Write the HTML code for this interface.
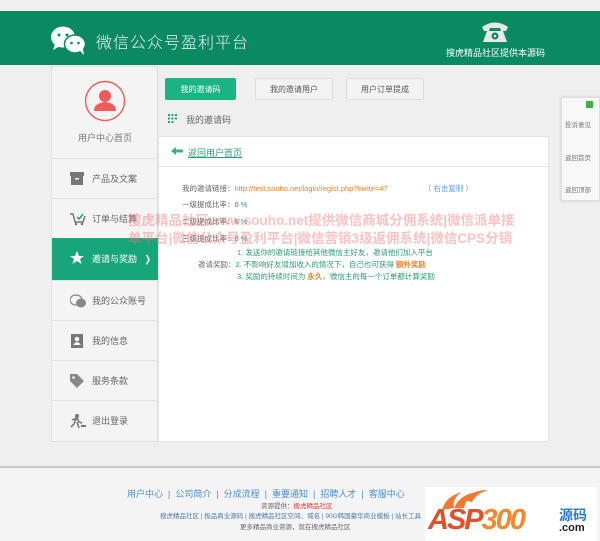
<!DOCTYPE html>
<html><head><meta charset="utf-8"><style>
*{margin:0;padding:0;box-sizing:border-box}
body{width:600px;height:541px;overflow:hidden;background:#efefef;font-family:"Liberation Sans","Noto Sans CJK SC",sans-serif;position:relative;font-size:9px;color:#555}
.abs{position:absolute}
#hdr{left:0;top:11px;width:600px;height:54px;background:#0b8a62}
#side{left:51px;top:66px;width:107px;height:376px;background:#f4f4f4;border:1px solid #e0e0e0}
.it{position:absolute;left:0;width:106px;height:40px;border-top:1px solid #e2e2e2;font-size:9px;color:#666;line-height:40px;padding-left:40px}
.it svg{position:absolute;left:18px;top:13px}
.act{background:#17a67b;color:#fff}
.tab{position:absolute;top:78px;height:22px;line-height:22px;text-align:center;font-size:8px;border:1px solid #ddd;background:#f3f3f3;color:#555;border-radius:2px}
#main{left:158px;top:136px;width:391px;height:306px;background:#fff;border:1px solid #e3e3e3}
.row{position:absolute;font-size:7.5px;color:#666;white-space:nowrap}
.wm{position:absolute;color:rgba(240,120,120,.45);font-size:13.5px;font-weight:bold;white-space:nowrap}
.fl{position:absolute;font-size:9px;color:#4a8ed0;white-space:nowrap}
</style></head><body>
<div class="abs" id="hdr"></div>
<svg class="abs" style="left:50px;top:24px" width="38" height="32" viewBox="0 0 38 32"><ellipse cx="13" cy="13" rx="12" ry="10.5" fill="#fff"/><path d="M5 20l-2 6 7-4z" fill="#fff"/><circle cx="9" cy="11" r="1.5" fill="#0b8a62"/><circle cx="17" cy="11" r="1.5" fill="#0b8a62"/><ellipse cx="25" cy="20" rx="10.5" ry="9" stroke="#0b8a62" stroke-width="1.5" fill="#fff"/><path d="M30 27l4 4-1-6z" fill="#fff"/><circle cx="21.5" cy="19" r="1.3" fill="#0b8a62"/><circle cx="28.5" cy="19" r="1.3" fill="#0b8a62"/></svg>
<div class="abs" style="left:96px;top:29px;font-size:16px;color:#eef;letter-spacing:1px;font-weight:300">微信公众号盈利平台</div>
<svg class="abs" style="left:480px;top:19px" width="30" height="24" viewBox="0 0 30 24"><path d="M2 8q13-9 26 0l-2 4h-5l-1-3h-10l-1 3h-5z" fill="#e8e8e8"/><path d="M7 12h16l4 11H3z" fill="#e8e8e8"/><circle cx="15" cy="17" r="3.5" fill="#0b8a62"/><circle cx="15" cy="17" r="1.3" fill="#e8e8e8"/></svg>
<div class="abs" style="left:446px;top:46px;font-size:9px;color:#fff">搜虎精品社区提供本源码</div>

<div class="abs" id="side">
<svg class="abs" style="left:32px;top:13px" width="42" height="42" viewBox="0 0 42 42"><circle cx="21" cy="21" r="19.5" fill="none" stroke="#ef5a5a" stroke-width="1.4"/><circle cx="21" cy="16" r="6" fill="#ef5a5a"/><path d="M10 31q0-8 11-9q11 1 11 9z" fill="#ef5a5a"/></svg>
<div class="abs" style="left:26px;top:64px;font-size:9px;color:#777">用户中心首页</div>
<div class="it" style="top:91px"><svg width="14" height="13"><rect x="0" y="0" width="14" height="4" fill="#777"/><rect x="1" y="4" width="12" height="9" fill="#777"/><rect x="5" y="6" width="4" height="1.5" fill="#f4f4f4"/></svg>产品及文案</div>
<div class="it" style="top:131px"><svg width="16" height="14"><path d="M0 2h3l2 8h8l2-6" stroke="#777" stroke-width="1.5" fill="none"/><circle cx="6" cy="12" r="1.3" fill="#777"/><circle cx="12" cy="12" r="1.3" fill="#777"/><path d="M7 5l2 2 4-5" stroke="#17a67b" stroke-width="1.5" fill="none"/></svg>订单与结算</div>
<div class="it act" style="top:171px;height:42px;line-height:42px;border-top:none"><svg width="14" height="14" viewBox="0 0 14 14"><path d="M7 0l2 5h5l-4 3 1.6 5L7 10l-4.6 3L4 8 0 5h5z" fill="#fff"/></svg>邀请与奖励<span style="position:absolute;left:92px;font-weight:bold">❭</span></div>
<div class="it" style="top:213px"><svg width="16" height="14"><ellipse cx="6" cy="6" rx="6" ry="5" fill="none" stroke="#888" stroke-width="1.2"/><ellipse cx="11" cy="9" rx="5" ry="4.5" fill="#888"/></svg>我的公众账号</div>
<div class="it" style="top:253px"><svg width="14" height="14"><rect x="1" y="0" width="12" height="14" fill="#777"/><circle cx="7" cy="5" r="2.3" fill="#f4f4f4"/><path d="M3 11q4-6 8 0z" fill="#f4f4f4"/></svg>我的信息</div>
<div class="it" style="top:293px"><svg width="14" height="14"><path d="M0 0h7l7 7-7 7-7-7z" fill="#888"/><circle cx="3.5" cy="3.5" r="1.3" fill="#f4f4f4"/></svg>服务条款</div>
<div class="it" style="top:333px"><svg width="16" height="14"><circle cx="7" cy="2" r="2" fill="#777"/><path d="M2 6l5-2 2 4 3 1M6 5l-2 5-3 3M7 8l2 6" stroke="#777" stroke-width="1.6" fill="none"/><rect x="11" y="11" width="5" height="2" fill="#777"/></svg>退出登录</div>
</div>

<div class="tab" style="left:165px;width:71px;background:#1ab381;color:#fff;border-color:#1ab381">我的邀请码</div>
<div class="tab" style="left:255px;width:78px">我的邀请用户</div>
<div class="tab" style="left:346px;width:78px">用户订单提成</div>
<svg class="abs" style="left:168px;top:114px" width="9" height="9"><g fill="#17a67b"><rect x="0" y="0" width="2" height="2"/><rect x="3.5" y="0" width="2" height="2"/><rect x="7" y="0" width="2" height="2"/><rect x="0" y="3.5" width="2" height="2"/><rect x="3.5" y="3.5" width="2" height="2"/><rect x="7" y="3.5" width="2" height="2"/><rect x="0" y="7" width="2" height="2"/><rect x="3.5" y="7" width="2" height="2"/></g></svg>
<div class="abs" style="left:186px;top:113px;font-size:9px;color:#666">我的邀请码</div>

<div class="abs" id="main">
<div class="abs" style="left:0;top:29px;width:389px;height:1px;background:#e5e5e5"></div>
<svg class="abs" style="left:12px;top:10px" width="12" height="8"><path d="M0 4l5-4v2.5h7v3H5V8z" fill="#3fae8a"/></svg>
<div class="abs" style="left:29px;top:9px;font-size:9px;color:#2a9d76;text-decoration:underline">返回用户首页</div>
<div class="row" style="left:23px;top:46px">我的邀请链接：<span style="color:#f08020">http://test.souho.net/login/regist.php?invite=47</span><span style="color:#5a9ee0;margin-left:36px">（ 右击复制 ）</span></div>
<div class="row" style="left:23px;top:62px">一级提成比率：<span style="color:#2a9d76">6 %</span></div>
<div class="row" style="left:23px;top:79px">二级提成比率：<span style="color:#2a9d76">6 %</span></div>
<div class="row" style="left:23px;top:96px">三级提成比率：<span style="color:#2a9d76">6 %</span></div>
<div class="row" style="left:78px;top:110px;color:#2a9d76">1. 发送你的邀请链接给其他微信主好友，邀请他们加入平台</div>
<div class="row" style="left:39px;top:122px">邀请奖励：<span style="color:#2a9d76">2. 不影响好友增加收入的情况下，自己也可获得 <b style="color:#f08020">额外奖励</b></span></div>
<div class="row" style="left:78px;top:134px;color:#2a9d76">3. 奖励的持续时间为 <b style="color:#f08020">永久</b>，微信主的每一个订单都计算奖励</div>
</div>
<div class="wm" style="left:128px;top:209px">搜虎精品社区www.souho.net提供微信商城分佣系统|微信派单接</div>
<div class="wm" style="left:128px;top:227px">单平台|微信公众号盈利平台|微信营销3级返佣系统|微信CPS分销</div>

<div class="abs" style="left:561px;top:97px;width:39px;height:104px;background:#f8f8f8;border:1px solid #ddd;box-shadow:0 0 3px #ccc"></div>
<div class="abs" style="left:586px;top:101px;width:7px;height:7px;background:#3cb043"></div>
<div class="abs" style="left:565px;top:119px;font-size:6.5px;color:#777">投诉意见</div>
<div class="abs" style="left:565px;top:152px;font-size:6.5px;color:#777">返回首页</div>
<div class="abs" style="left:565px;top:184px;font-size:6.5px;color:#777">返回顶部</div>

<div class="abs" style="left:0;top:466px;width:600px;height:2px;background:#c8c8c8"></div>
<div class="abs" style="left:0;top:468px;width:600px;height:73px;background:#f4f4f4"></div>
<div class="fl" style="left:127px;top:487px">用户中心 &nbsp;|&nbsp; 公司简介 &nbsp;|&nbsp; 分成流程 &nbsp;|&nbsp; 重要通知 &nbsp;|&nbsp; 招聘人才 &nbsp;|&nbsp; 客服中心</div>
<div class="abs" style="left:261px;top:500px;font-size:6.5px;color:#666">资源提供：<span style="color:#e33">搜虎精品社区</span></div>
<div class="abs" style="left:160px;top:510px;font-size:6.5px;color:#4a7ab0;white-space:nowrap">搜虎精品社区 | 极品商业源码 | 搜虎精品社区空间、域名 | 90G韩国豪华商业模板 | 站长工具</div>
<div class="abs" style="left:240px;top:521px;font-size:6.5px;color:#666">更多精品商业资源，就在搜虎精品社区</div>
<div class="abs" style="left:425px;top:487px;width:172px;height:54px;background:#fff"></div>
<svg class="abs" style="left:440px;top:488px" width="50" height="24"><path d="M2 22q4-14 20-18q-10 6-8 16zM14 20q6-14 24-16q-12 6-14 16zM24 12q8-10 24-10q-12 4-16 12z" fill="#f07a30"/></svg>
<div class="abs" style="left:428px;top:504px;font-size:29px;font-weight:bold;font-style:italic;letter-spacing:-2px;font-family:'Liberation Sans',sans-serif"><span style="color:#e0502a">ASP</span><span style="color:#f08a30">300</span></div>
<div class="abs" style="left:559px;top:505px;font-size:14px;font-weight:bold;color:#2a7ad0">源码</div>
<div class="abs" style="left:559px;top:522px;font-size:11px;font-weight:bold;color:#222">.com</div>
</body></html>
